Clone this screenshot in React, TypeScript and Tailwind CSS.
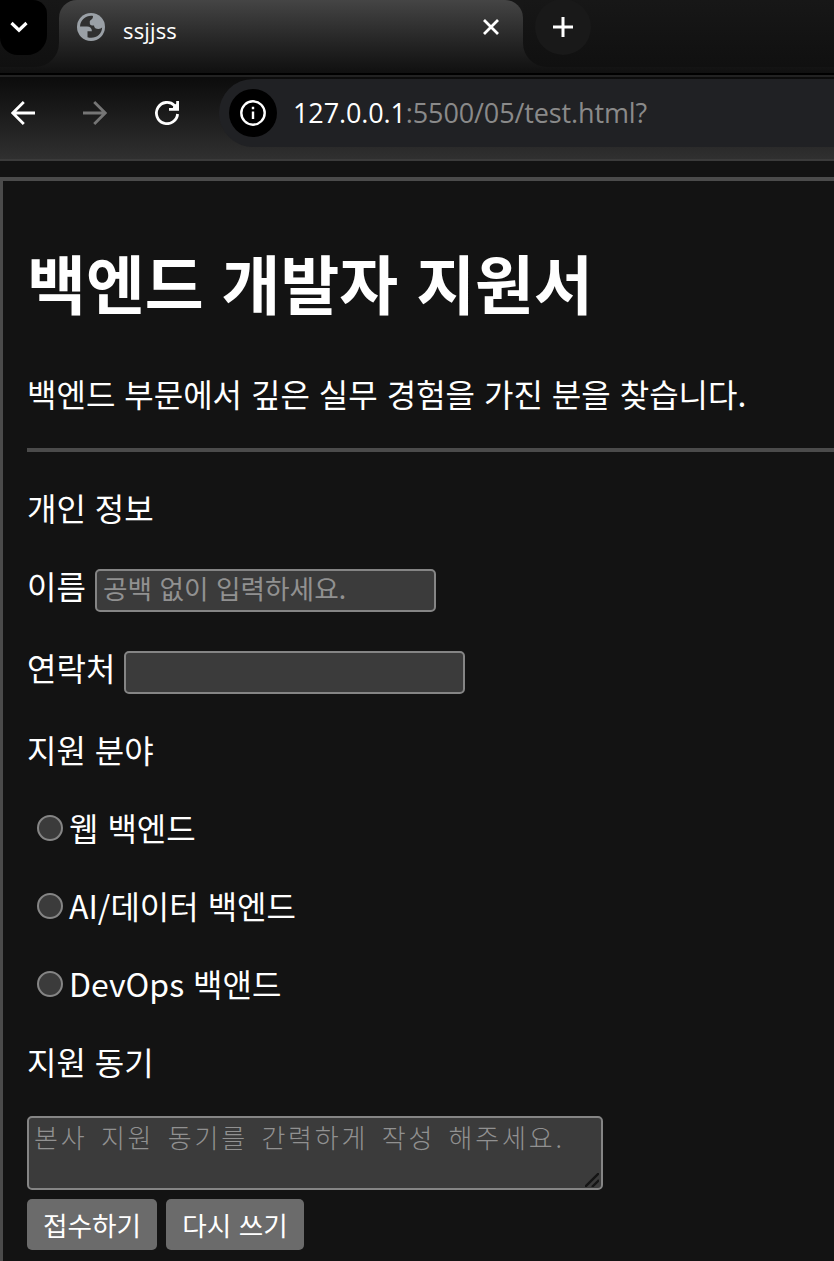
import type { ReactNode } from "react";

type RowProps = {
  children: ReactNode;
  className?: string;
}

const inputClass = "box-border w-[341px] h-[43px] mt-[7px] border-2 border-[#858585] rounded-[5px] bg-[#3b3b3b] pl-[6px] pb-[6px] text-[26.67px] leading-[34px] text-white placeholder:text-[#919191] placeholder:opacity-100 outline-none";
const buttonClass = "h-[51px] rounded-[5px] bg-[#6b6b6b] text-[26.67px] leading-[51px] text-white text-center";

function BackIcon({ className }: { className: string }) {
  return (
    <svg viewBox="0 0 24 24" fill="none" stroke="currentColor" strokeWidth="2.8" className={className}>
      <path d="M24 12H2M12.800 1L1.800 12l11 11" />
    </svg>
  );
}

function Tabs() {
  return (
    <div className="flex h-[73px] bg-linear-to-b from-[#454545] to-[#101010]">
      <div className="w-[59px] h-[67px] rounded-br-[24px] bg-linear-to-b from-[#171717] to-[#101010]">
        <div className="w-[47px] h-[55px] rounded-br-[20px] rounded-tr-[14px] rounded-bl-[18px] bg-black">
          <svg viewBox="0 0 47 55" fill="none" stroke="#fff" strokeWidth="3.2" className="w-[47px] h-[55px]">
            <path d="M11.5 23l7.5 7.2 7.5-7.2" />
          </svg>
        </div>
      </div>
      <div className="w-[464px] h-[73px] bg-[#171717]">
        <div className="flex items-start h-full rounded-t-[18px] bg-linear-to-b from-[#454545] to-[#101010]">
          <svg viewBox="0 0 28 28" className="w-7 h-7 ml-[18px] mt-[13px]">
            <circle cx="14" cy="14" r="14" fill="#9aa0a6" />
            <path d="M16 3C9.500 2 3.500 6.500 3 13.500h7c3.200 0 4.900 1.800 4.900 4.700H10.500v6c7.200 2.400 14.400-2.400 14.600-9.700-1 .5-1.900 1.500-3.700 1.500-2.300 0-4.400-1-4.400-3.500-2.300.1-4.200-.3-4.200-2.300V8.400c0-1.400 3.400-1.700 3.200-5.400z" fill="#303030" />
          </svg>
          <span className="ml-[18px] mt-[15px] text-[22px] leading-[30px] tracking-[0.15px] text-white font-['Open_Sans',sans-serif]">ssjjss</span>
          <svg viewBox="0 0 16 16" fill="none" stroke="#fff" strokeWidth="2.8" className="w-4 h-4 ml-auto mt-[19px] mr-[24px]">
            <path d="M1 1l14 14M15 1L1 15" />
          </svg>
        </div>
      </div>
      <div className="flex-1 h-[67px] rounded-bl-[24px] bg-linear-to-b from-[#171717] to-[#101010]">
        <div className="w-14 h-14 -mt-px ml-3 rounded-full bg-[#191919]">
          <svg viewBox="0 0 56 56" fill="none" stroke="#fff" strokeWidth="3" className="w-14 h-14">
            <path d="M18 28h20M28 18v20" />
          </svg>
        </div>
      </div>
    </div>
  );
}

function Toolbar() {
  return (
    <div className="flex items-start h-[88px] border-t-2 border-b-2 border-t-black border-b-[#3b3b3b] bg-linear-to-b from-[#0b0b0b] to-[#303030]">
      <div className="flex flex-col w-full">
        <div className="h-[2px] bg-[#222]" />
        <div className="flex items-center h-[72px]">
          <BackIcon className="w-6 h-6 ml-[11px] text-white" />
          <BackIcon className="w-6 h-6 ml-[48px] rotate-180 text-[#757575]" />
          <svg viewBox="0 0 24 24" fill="none" stroke="#fff" strokeWidth="2.8" className="w-6 h-6 ml-[48px]">
            <path d="M22.600 13A10.600 10.600 0 1 1 19.500 4.500L22 7M22.600 0v8.400H14" />
            <path d="M18.500 4.500L22.500 2v6h-5z" fill="#fff" stroke="none" />
          </svg>
          <div className="flex flex-1 items-center h-[68px] ml-[40px] pl-[10px] rounded-l-full bg-[#202124]">
            <div className="flex items-center justify-center w-12 h-12 rounded-full bg-black">
              <svg viewBox="0 0 26 26" fill="none" stroke="#fff" strokeWidth="2.4" className="w-[26px] h-[26px]">
                <circle cx="13" cy="13" r="11.7" />
                <path d="M13 11.500v7.500M13 6.700v2.600" />
              </svg>
            </div>
            <span className="ml-4 text-[27px] leading-9 tracking-[-0.12px] text-[#8a8a8a] font-['Open_Sans',sans-serif]">
              <span className="text-white">127.0.0.1</span>:5500/05/test.html?
            </span>
          </div>
        </div>
      </div>
    </div>
  );
}

function Row({ children, className = "h-[46px]" }: RowProps) {
  return <div className={`flex items-start mb-8 leading-[46px] ${className}`}>{children}</div>;
}

function RadioRow({ label }: { label: string }) {
  return (
    <Row>
      <input type="radio" name="field" aria-label={label} className="appearance-none w-[26px] h-[26px] mt-[11px] ml-[10px] mr-[6px] rounded-full border-2 border-[#858585] bg-[#3b3b3b]" />
      <span>{label}</span>
    </Row>
  );
}

export default function App() {
  return (
    <main className="w-[834px] h-[1261px] overflow-hidden bg-[#131313] text-white font-['Noto_Sans_CJK_KR',sans-serif]">
      <Tabs />
      <Toolbar />
      <form className="h-[1100px] mt-4 pt-[54px] pl-[24px] border-t-4 border-l-[3px] border-[#4b4b4b] text-[32px] [word-spacing:1.8px]">
        <h1 className="h-[93px] mb-[42px] text-[64px] leading-[93px] font-bold [word-spacing:3.4px]">백엔드 개발자 지원서</h1>
        <p className="h-[46px] leading-[46px]">백엔드 부문에서 깊은 실무 경험을 가진 분을 찾습니다.</p>
        <hr className="h-1 my-8 border-0 bg-[#4b4b4b]" />
        <Row>개인 정보</Row>
        <Row className="h-[50px]">
          <span className="w-[68px]">이름</span>
          <input type="text" placeholder="공백 없이 입력하세요." className={`${inputClass} [word-spacing:1.5px]`} />
        </Row>
        <Row className="h-[50px]">
          <span className="w-[97px]">연락처</span>
          <input type="text" className={inputClass} />
        </Row>
        <Row>지원 분야</Row>
        <RadioRow label="웹 백엔드" />
        <RadioRow label="AI/데이터 백엔드" />
        <RadioRow label="DevOps 백앤드" />
        <Row>지원 동기</Row>
        <div className="relative w-[576px] h-[74px]">
          <textarea
            placeholder="본사 지원 동기를 간력하게 작성 해주세요."
            className="block w-full h-full resize-none overflow-hidden border-2 border-[#858585] rounded-[5px] bg-[#3b3b3b] pl-[5px] text-[26px] leading-[37px] tracking-[2.8px] [word-spacing:4.9px] font-light placeholder:text-[#919191] placeholder:opacity-100 outline-none"
          />
          <svg viewBox="0 0 14 14" stroke="#151515" strokeWidth="2.4" className="absolute right-[4px] bottom-[3px] w-3.5 h-3.5">
            <path d="M0 14L14 0M7 14l7-7" />
          </svg>
        </div>
        <div className="flex gap-[9px] mt-[9px]">
          <button type="button" className={`w-[130px] ${buttonClass}`}>접수하기</button>
          <button type="button" className={`w-[138px] [word-spacing:1.5px] ${buttonClass}`}>다시 쓰기</button>
        </div>
      </form>
    </main>
  );
}
